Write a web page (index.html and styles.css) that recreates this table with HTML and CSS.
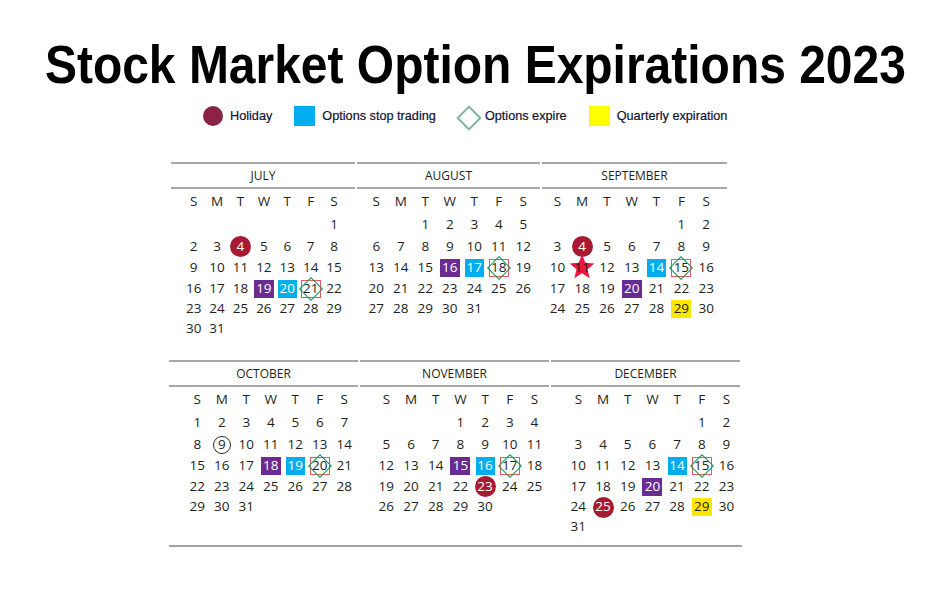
FILE: index.html
```html
<!DOCTYPE html>
<html lang="en">
<head>
<meta charset="utf-8">
<title>Stock Market Option Expirations 2023</title>
<link rel="stylesheet" href="styles.css">
</head>
<body>
<h1 class="title">Stock Market Option Expirations 2023</h1>

<div class="legend">
  <div class="legend-item"><span class="key key-holiday"></span>Holiday</div>
  <div class="legend-item"><span class="key key-stop"></span>Options stop trading</div>
  <div class="legend-item"><span class="key key-expire"></span>Options expire</div>
  <div class="legend-item"><span class="key key-quarter"></span>Quarterly expiration</div>
</div>

<div class="cal-row cal-top">
  <section class="month m-jul">
    <div class="month-name">July</div>
    <div class="dow"><span>S</span><span>M</span><span>T</span><span>W</span><span>T</span><span>F</span><span>S</span></div>
    <div class="days">
      <span class="s7">1</span>
      <span>2</span><span>3</span><span><em class="mk mk-hol">4</em></span><span>5</span><span>6</span><span>7</span><span>8</span>
      <span>9</span><span>10</span><span>11</span><span>12</span><span>13</span><span>14</span><span>15</span>
      <span>16</span><span>17</span><span>18</span><span><em class="mk mk-last">19</em></span><span><em class="mk mk-stop">20</em></span><span><em class="mk mk-exp">21</em></span><span>22</span>
      <span>23</span><span>24</span><span>25</span><span>26</span><span>27</span><span>28</span><span>29</span>
      <span>30</span><span>31</span>
    </div>
  </section>
  <section class="month m-aug">
    <div class="month-name">August</div>
    <div class="dow"><span>S</span><span>M</span><span>T</span><span>W</span><span>T</span><span>F</span><span>S</span></div>
    <div class="days">
      <span class="s3">1</span><span>2</span><span>3</span><span>4</span><span>5</span>
      <span>6</span><span>7</span><span>8</span><span>9</span><span>10</span><span>11</span><span>12</span>
      <span>13</span><span>14</span><span>15</span><span><em class="mk mk-last">16</em></span><span><em class="mk mk-stop">17</em></span><span><em class="mk mk-exp">18</em></span><span>19</span>
      <span>20</span><span>21</span><span>22</span><span>23</span><span>24</span><span>25</span><span>26</span>
      <span>27</span><span>28</span><span>29</span><span>30</span><span>31</span>
    </div>
  </section>
  <section class="month m-sep">
    <div class="month-name">September</div>
    <div class="dow"><span>S</span><span>M</span><span>T</span><span>W</span><span>T</span><span>F</span><span>S</span></div>
    <div class="days">
      <span class="s6">1</span><span>2</span>
      <span>3</span><span><em class="mk mk-hol">4</em></span><span>5</span><span>6</span><span>7</span><span>8</span><span>9</span>
      <span>10</span><span><em class="mk mk-star"><svg class="star" viewBox="0 0 24 24" aria-hidden="true"><polygon points="12,1.2 14.9,8.4 22.6,8.9 16.7,13.9 18.6,21.6 12,17.4 5.4,21.6 7.3,13.9 1.4,8.9 9.1,8.4"/></svg>11</em></span><span>12</span><span>13</span><span><em class="mk mk-stop">14</em></span><span><em class="mk mk-exp">15</em></span><span>16</span>
      <span>17</span><span>18</span><span>19</span><span><em class="mk mk-last">20</em></span><span>21</span><span>22</span><span>23</span>
      <span>24</span><span>25</span><span>26</span><span>27</span><span>28</span><span><em class="mk mk-quar">29</em></span><span>30</span>
    </div>
  </section>
</div>

<div class="cal-row cal-bottom">
  <section class="month m-oct">
    <div class="month-name">October</div>
    <div class="dow"><span>S</span><span>M</span><span>T</span><span>W</span><span>T</span><span>F</span><span>S</span></div>
    <div class="days">
      <span>1</span><span>2</span><span>3</span><span>4</span><span>5</span><span>6</span><span>7</span>
      <span>8</span><span><em class="mk mk-ring">9</em></span><span>10</span><span>11</span><span>12</span><span>13</span><span>14</span>
      <span>15</span><span>16</span><span>17</span><span><em class="mk mk-last">18</em></span><span><em class="mk mk-stop">19</em></span><span><em class="mk mk-exp">20</em></span><span>21</span>
      <span>22</span><span>23</span><span>24</span><span>25</span><span>26</span><span>27</span><span>28</span>
      <span>29</span><span>30</span><span>31</span>
    </div>
  </section>
  <section class="month m-nov">
    <div class="month-name">November</div>
    <div class="dow"><span>S</span><span>M</span><span>T</span><span>W</span><span>T</span><span>F</span><span>S</span></div>
    <div class="days">
      <span class="s4">1</span><span>2</span><span>3</span><span>4</span>
      <span>5</span><span>6</span><span>7</span><span>8</span><span>9</span><span>10</span><span>11</span>
      <span>12</span><span>13</span><span>14</span><span><em class="mk mk-last">15</em></span><span><em class="mk mk-stop">16</em></span><span><em class="mk mk-exp">17</em></span><span>18</span>
      <span>19</span><span>20</span><span>21</span><span>22</span><span><em class="mk mk-hol">23</em></span><span>24</span><span>25</span>
      <span>26</span><span>27</span><span>28</span><span>29</span><span>30</span>
    </div>
  </section>
  <section class="month m-dec">
    <div class="month-name">December</div>
    <div class="dow"><span>S</span><span>M</span><span>T</span><span>W</span><span>T</span><span>F</span><span>S</span></div>
    <div class="days">
      <span class="s6">1</span><span>2</span>
      <span>3</span><span>4</span><span>5</span><span>6</span><span>7</span><span>8</span><span>9</span>
      <span>10</span><span>11</span><span>12</span><span>13</span><span><em class="mk mk-stop">14</em></span><span><em class="mk mk-exp">15</em></span><span>16</span>
      <span>17</span><span>18</span><span>19</span><span><em class="mk mk-last">20</em></span><span>21</span><span>22</span><span>23</span>
      <span>24</span><span><em class="mk mk-hol">25</em></span><span>26</span><span>27</span><span>28</span><span><em class="mk mk-quar">29</em></span><span>30</span>
      <span>31</span>
    </div>
  </section>
</div>
<div class="cal-end"></div>
</body>
</html>
```

FILE: styles.css
```css
* { box-sizing: border-box; }

html, body {
  margin: 0;
  background: #fff;
}

body {
  width: 950px;
  height: 602px;
  overflow: hidden;
  font-family: "Open Sans", "Noto Sans", sans-serif;
  color: #231f20;
}

.title {
  margin: 35px 0 0;
  padding-right: 6px;
  font: bold 53px/60px "Liberation Sans", Arial, sans-serif;
  text-align: center;
  color: #000;
  white-space: nowrap;
  transform: scaleX(0.905);
  transform-origin: 473px 0;
}

/* Legend */
.legend {
  display: flex;
  align-items: center;
  height: 20px;
  margin: 11px 0 0 203px;
  font: 12.7px "Liberation Sans", Arial, sans-serif;
  color: #0e1230;
  -webkit-text-stroke: 0.2px #0e1230;
}

.legend-item {
  display: flex;
  align-items: center;
  gap: 7px;
  margin-right: 22px;
}

.key {
  flex: none;
  width: 20px;
  height: 20px;
  position: relative;
}

.key-holiday { border-radius: 50%; background: #8c2346; }
.key-stop { background: #00aeef; width: 21px; }
.key-quarter { background: #ffff00; width: 21px; }
.key-expire::after {
  content: "";
  position: absolute;
  left: 2px;
  top: 3px;
  width: 14px;
  height: 14px;
  border: 2px solid #7fb39c;
  transform: rotate(45deg);
}

/* Calendar */
.cal-row {
  display: flex;
  align-items: flex-start;
  gap: 2px;
}

.cal-top { margin: 36px 0 0 171px; }
.cal-bottom { margin: 21px 0 0 169px; }

.cal-end {
  width: 573px;
  height: 2px;
  margin: 8px 0 0 169px;
  background: #a5a2a2;
}

.month { width: var(--w); }

.m-jul { --w: 184px; --pl: 11px; --cw: 23.4px; }
.m-aug { --w: 183px; --pl: 7px;  --cw: 24.5px; }
.m-sep { --w: 185px; --pl: 3px;  --cw: 24.8px; }
.m-oct { --w: 189px; --pl: 16px; --cw: 24.5px; }
.m-nov { --w: 189px; --pl: 14px; --cw: 24.7px; }
.m-dec { --w: 189px; --pl: 15px; --cw: 24.7px; }

.month-name {
  height: 27px;
  border-top: 2px solid #a9a6a6;
  border-bottom: 2px solid #a9a6a6;
  display: flex;
  align-items: center;
  justify-content: center;
  font-size: 12px;
  text-transform: uppercase;
  color: #231f20;
}

.dow, .days {
  display: grid;
  grid-template-columns: repeat(7, var(--cw));
  padding-left: var(--pl);
}

.dow {
  height: 25px;
  align-items: center;
}

.days {
  grid-template-rows: 22px 21px 21px 21px 20px 20px;
}

.dow span, .days span {
  display: flex;
  align-items: center;
  justify-content: center;
  font-size: 13.5px;
  line-height: 1;
  white-space: nowrap;
}

.s3 { grid-column-start: 3; }
.s4 { grid-column-start: 4; }
.s6 { grid-column-start: 6; }
.s7 { grid-column-start: 7; }

/* Markers */
.mk {
  display: flex;
  align-items: center;
  justify-content: center;
  font-style: normal;
  flex: none;
}

.mk-hol {
  width: 21px;
  height: 21px;
  border-radius: 50%;
  background: #a61b32;
  color: #fff;
}

.mk-last {
  width: 20px;
  height: 18px;
  background: #6a2c91;
  color: #fff;
}

.mk-stop {
  width: 19px;
  height: 18px;
  background: #00aeef;
  color: #fff;
}

.mk-quar {
  width: 20px;
  height: 18px;
  background: #ffe600;
}

.mk-exp {
  width: 20px;
  height: 18px;
  border: 1px solid #e25a61;
  position: relative;
}

.mk-exp::after {
  content: "";
  position: absolute;
  left: 50%;
  top: 50%;
  width: 15px;
  height: 15px;
  border: 1.6px solid #14965a;
  transform: translate(-50%, -50%) rotate(45deg);
}

.mk-ring {
  width: 18px;
  height: 18px;
  border: 1px solid #2a2a2a;
  border-radius: 50%;
}

.mk-star {
  position: relative;
  z-index: 0;
  width: 20px;
  height: 20px;
}

.star {
  position: absolute;
  left: -4px;
  top: -5px;
  width: 28px;
  height: 28px;
  z-index: -1;
  fill: #e8193e;
}
```
